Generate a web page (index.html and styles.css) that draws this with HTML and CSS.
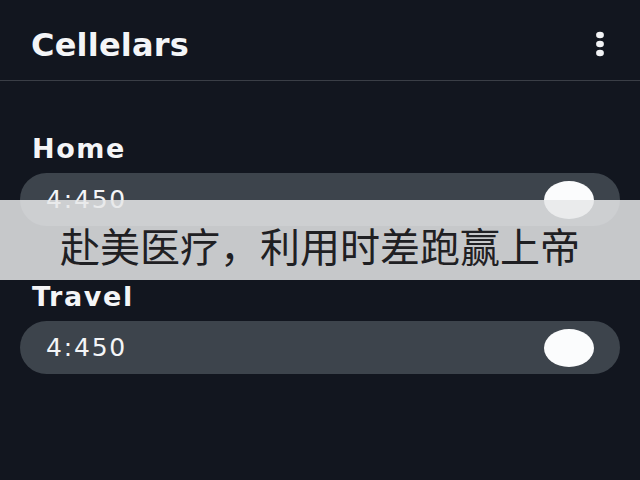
FILE: index.html
```html
<!DOCTYPE html>
<html lang="en">
<head>
<meta charset="utf-8">
<title>Cellelars</title>
<link rel="stylesheet" href="styles.css">
</head>
<body>
<div class="app">
  <header class="topbar">
    <h1 class="title">Cellelars</h1>
    <svg class="menu" width="12" height="26" viewBox="0 0 12 26" aria-hidden="true">
      <ellipse cx="6" cy="4" rx="3.9" ry="3.3" fill="#f2f3f5"/>
      <ellipse cx="6" cy="13" rx="3.9" ry="3.3" fill="#f2f3f5"/>
      <ellipse cx="6" cy="22" rx="3.9" ry="3.3" fill="#f2f3f5"/>
    </svg>
  </header>
  <main class="content">
    <section class="group">
      <h2 class="label">Home</h2>
      <div class="pill">
        <span class="time">4:450</span>
        <span class="knob"></span>
      </div>
    </section>
    <section class="group">
      <h2 class="label">Travel</h2>
      <div class="pill">
        <span class="time">4:450</span>
        <span class="knob"></span>
      </div>
    </section>
  </main>
  <div class="banner">赴美医疗，利用时差跑赢上帝</div>
</div>
</body>
</html>
```

FILE: styles.css
```css
* { box-sizing: border-box; }

html, body {
  margin: 0;
  padding: 0;
  background: #12161f;
}

.app {
  position: relative;
  width: 640px;
  height: 480px;
  overflow: hidden;
  background: #12161f;
  font-family: "DejaVu Sans", "Liberation Sans", sans-serif;
  color: #f3f4f6;
}

.topbar {
  height: 81px;
  padding: 10px 34px 0 31px;
  display: flex;
  align-items: center;
  justify-content: space-between;
  border-bottom: 1px solid #3a3e46;
}

.title {
  margin: 0;
  font-size: 32px;
  line-height: 32px;
  font-weight: 700;
  letter-spacing: 0.2px;
  color: #f4f5f7;
}

.menu {
  display: block;
  margin-bottom: 3px;
}

.content {
  padding: 55px 20px 0 20px;
  display: flex;
  flex-direction: column;
  gap: 58px;
}

.group {
  display: flex;
  flex-direction: column;
  gap: 11px;
}

.label {
  margin: 0 0 0 12px;
  font-size: 27px;
  line-height: 26px;
  font-weight: 700;
  letter-spacing: 1.6px;
  color: #f4f5f7;
}

.pill {
  height: 53px;
  border-radius: 27px;
  background: #3d444c;
  display: flex;
  align-items: center;
  justify-content: space-between;
  padding: 0 26px 0 26px;
}

.time {
  font-size: 25px;
  line-height: 24px;
  letter-spacing: 1.8px;
  color: #f4f5f7;
}

.knob {
  width: 50px;
  height: 38px;
  border-radius: 50%;
  background: #fbfcfd;
}

.banner {
  position: absolute;
  left: 0;
  top: 200px;
  width: 640px;
  height: 80px;
  padding-top: 9px;
  display: flex;
  align-items: center;
  justify-content: center;
  background: rgba(230, 231, 233, 0.85);
  font-family: "Noto Sans CJK SC", sans-serif;
  font-size: 40px;
  line-height: 40px;
  color: #1f2023;
}
```
